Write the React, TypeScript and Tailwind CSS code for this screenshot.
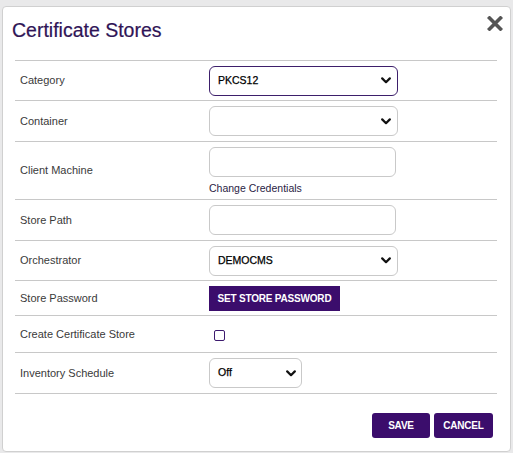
import React from "react";

const Chevron = () => (
  <svg width="10" height="7" viewBox="0 0 10 7" className="shrink-0">
    <path d="M1.2 1.4 L5 5.2 L8.8 1.4" fill="none" stroke="#111" strokeWidth="2.2" strokeLinecap="round" strokeLinejoin="round" />
  </svg>
);

function Select({ value, focused, wide = true }: { value: string; focused?: boolean; wide?: boolean }) {
  return (
    <div
      className={
        "h-[30px] flex items-center justify-between pl-[8px] rounded-[6px] bg-white border " +
        (focused ? "border-[#3d1f6b] " : "border-[#c9c9c9] ") +
        (wide ? "w-[189px] pr-[6px]" : "w-[93px] pr-[5px]")
      }
    >
      <span className="text-[10.5px] text-[#000] [-webkit-text-stroke:0.25px_#000]">{value}</span>
      <Chevron />
    </div>
  );
}

function Input() {
  return <div className="h-[30px] w-[187px] rounded-[6px] bg-white border border-[#c9c9c9]" />;
}

function Row({ label, h, children }: { label: string; h: string; children: React.ReactNode }) {
  return (
    <div className={"grid grid-cols-[194px_1fr] items-center border-t border-[#c8c8c8] " + h}>
      <div className="pl-[5px] text-[11px] text-[#3a3a3a]">{label}</div>
      <div>{children}</div>
    </div>
  );
}

export default function App() {
  return (
    <div
      className="w-[513px] h-[453px] bg-[#e9e9ea] pt-[6px] pl-[2px] overflow-hidden"
      style={{ fontFamily: '"Liberation Sans", Arial, sans-serif' }}
    >
      <div className="w-[509px] h-[446px] bg-white border border-[#d0d0d0] rounded-[4px] flex flex-col">
        <div className="h-[53px] flex justify-between items-start pl-[9px] pr-[7px]">
          <h1 className="pt-[12px] text-[19.5px] leading-[22px] text-[#2f1456] [-webkit-text-stroke:0.2px_#2f1456]">Certificate Stores</h1>
          <button className="mt-[9px] w-[16px] h-[15px] flex items-center justify-center" aria-label="Close">
            <svg width="16" height="15" viewBox="0 0 16 15">
              <path d="M2.5 2 L13.5 13 M13.5 2 L2.5 13" stroke="#555" strokeWidth="3.6" strokeLinecap="square" />
            </svg>
          </button>
        </div>

        <div className="pl-[12px] pr-[13px]">
          <div className="border-b border-[#c8c8c8]">
            <Row label="Category" h="h-[40px]">
              <Select value="PKCS12" focused />
            </Row>
            <Row label="Container" h="h-[41px]">
              <Select value="" />
            </Row>
            <Row label="Client Machine" h="h-[58px]">
              <div className="flex flex-col">
                <Input />
                <span className="mt-[5px] text-[10.5px] leading-[13px] text-[#2a1d45]">Change Credentials</span>
              </div>
            </Row>
            <Row label="Store Path" h="h-[41px]">
              <Input />
            </Row>
            <Row label="Orchestrator" h="h-[40px]">
              <Select value="DEMOCMS" />
            </Row>
            <Row label="Store Password" h="h-[35px]">
              <button className="h-[25px] w-[131px] bg-[#3b0d6c] text-white text-[10px] font-bold tracking-[-0.2px] flex items-center justify-center">
                SET STORE PASSWORD
              </button>
            </Row>
            <Row label="Create Certificate Store" h="h-[37px]">
              <div className="pl-[5px] pt-[3px]">
                <span className="block w-[11px] h-[11px] border-[1.5px] border-[#3d1a6e] rounded-[2px] bg-white" />
              </div>
            </Row>
            <Row label="Inventory Schedule" h="h-[41px]">
              <Select value="Off" wide={false} />
            </Row>
          </div>
          <div className="flex justify-end gap-[4px] pr-[4px] mt-[19px]">
            <button className="h-[25px] w-[58px] rounded-[3px] bg-[#3b0d6c] text-white text-[10px] font-bold tracking-[-0.2px]">
              SAVE
            </button>
            <button className="h-[25px] w-[59px] rounded-[3px] bg-[#3b0d6c] text-white text-[10px] font-bold tracking-[-0.2px]">
              CANCEL
            </button>
          </div>
        </div>
      </div>
    </div>
  );
}
